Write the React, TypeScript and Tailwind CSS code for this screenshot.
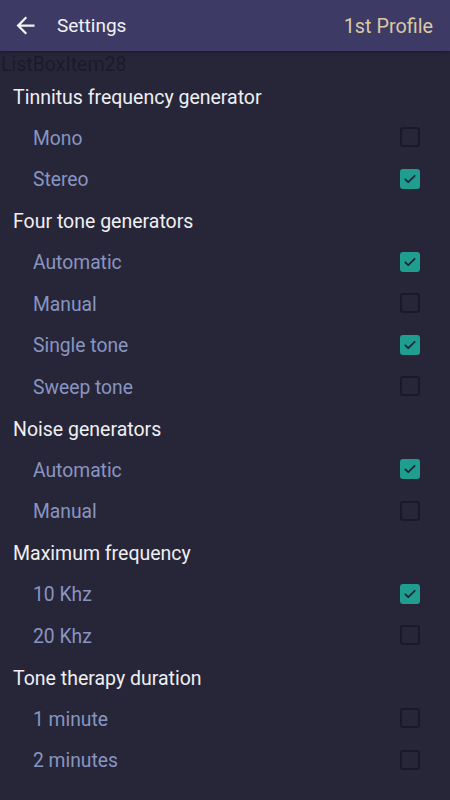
import React from "react";

type Item = { label: string; checked: boolean };
type Section = { title: string; items: Item[] };

const sections: Section[] = [
  {
    title: "Tinnitus frequency generator",
    items: [
      { label: "Mono", checked: false },
      { label: "Stereo", checked: true },
    ],
  },
  {
    title: "Four tone generators",
    items: [
      { label: "Automatic", checked: true },
      { label: "Manual", checked: false },
      { label: "Single tone", checked: true },
      { label: "Sweep tone", checked: false },
    ],
  },
  {
    title: "Noise generators",
    items: [
      { label: "Automatic", checked: true },
      { label: "Manual", checked: false },
    ],
  },
  {
    title: "Maximum frequency",
    items: [
      { label: "10 Khz", checked: true },
      { label: "20 Khz", checked: false },
    ],
  },
  {
    title: "Tone therapy duration",
    items: [
      { label: "1 minute", checked: false },
      { label: "2 minutes", checked: false },
    ],
  },
];

const Checkbox = ({ checked }: { checked: boolean }) =>
  checked ? (
    <div className="w-[20px] h-[20px] rounded-[3px] bg-[#1f9e8f] flex items-center justify-center">
      <svg width="14" height="14" viewBox="0 0 24 24" fill="none">
        <path d="M4 12.5l5 5L20 6.5" stroke="#1c2535" strokeWidth="3" strokeLinecap="round" strokeLinejoin="round" />
      </svg>
    </div>
  ) : (
    <div className="w-[20px] h-[20px] rounded-[3px] border-2 border-[#1a1927]" />
  );

export default function App() {
  return (
    <div className="w-[450px] h-[800px] bg-[#272639] overflow-hidden" style={{ fontFamily: "Roboto, 'Noto Sans', sans-serif" }}>
      {/* верхняя панель */}
      <div className="h-[51px] bg-[#3e3a66] flex items-center shadow-[0_1px_3px_rgba(0,0,0,0.35)] relative z-10">
        <svg className="ml-[12px]" width="27" height="27" viewBox="0 0 24 24" fill="#f2f2f2">
          <path d="M20 11H7.83l5.59-5.59L12 4l-8 8 8 8 1.41-1.41L7.83 13H20v-2z" />
        </svg>
        <span className="ml-[18px] mt-[2px] text-[19px] text-[#f1f1f4]">Settings</span>
        <span className="ml-auto mr-[17px] mt-[2px] text-[19.8px] text-[#d9c9a3]">1st Profile</span>
      </div>

      <div className="h-[24px] flex items-center pl-[1px] pt-[3px] text-[19.5px] leading-none text-[#1b1a29]">ListBoxItem28</div>

      {sections.map((s) => (
        <div key={s.title}>
          <div className="h-[41.5px] flex items-center pl-[13px] pt-[3px] text-[19.5px] text-[#efeff2]">{s.title}</div>
          {s.items.map((it) => (
            <div key={it.label} className="h-[41.5px] flex items-center pl-[33px] pr-[30px]">
              <span className="mt-[4px] text-[19.3px] text-[#8895c0]">{it.label}</span>
              <div className="ml-auto">
                <Checkbox checked={it.checked} />
              </div>
            </div>
          ))}
        </div>
      ))}
    </div>
  );
}
